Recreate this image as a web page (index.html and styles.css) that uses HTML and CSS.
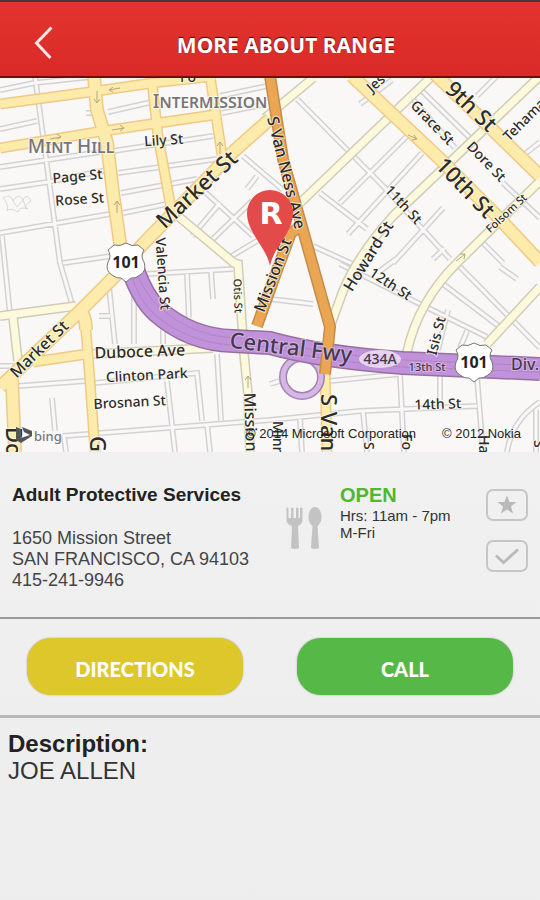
FILE: index.html
```
<!DOCTYPE html>
<html lang="en">
<head>
  <meta charset="utf-8">
  <meta name="viewport" content="width=device-width, initial-scale=1">
  <title>More About Range</title>
  <link rel="stylesheet" href="styles.css">
</head>
<body>
<header class="topbar">
  <a class="back" href="#" aria-label="Back">
    <svg width="20" height="34" viewBox="0 0 20 34"><path d="M17.500 1.500L2.500 17L16.500 32"/></svg>
  </a>
  <h1>MORE ABOUT RANGE</h1>
</header>

<main>
  <svg class="map" viewBox="0 78 540 374" role="img" aria-label="Map">
    <defs>
      <!-- side streets, stroked twice to get the double outline -->
      <path id="streets" d="M35 76L60 263L72 304M0 129L37 121M0 90L34 83L90 77M108 112L152 102M86 113H97M220 96L267 86M222 113L262 105M113 151L213 136M118 173L217 159M121 193L197 179M123 213L167 204M0 167L100 152M0 189L48 182L107 170M0 233L110 214M63 263L112 256M2 236L10 314M243 156L283 190M257 176L247 189M205 192L253 236M192 236L220 203M213 239L252 201M230 257L262 238
      M297 99L383 186L450 259M320 193L367 229M340 203L407 136M348 234L422 153M420 89L470 138M360 104L392 80M410 96L455 148M477 96L497 76M525 154L540 142M503 183L540 218M393 263L443 208M433 259L445 248M483 243L503 263M313 246L357 266M340 264L420 304L487 337M443 284L500 327M460 267L540 348M500 267L517 279M380 271L396 259M270 299L313 304M467 331L460 348M448 310L438 350
      M330 381L400 374L404 452M440 374V400M477 377L483 452M363 411L367 452M300 419L302 452M270 384L280 381M507 452Q512 420 540 402M536 410V452M18 386L85 381M95 383L197 373L202 421M52 398L55 431M63 436L270 420L360 411L477 406M167 381L175 452M217 354L221 421M207 424L210 452M64 436L66 452M187 274L189 318M211 271L213 299M147 274L233 269M134 291V344M109 287L115 344M99 316H110M163 320V344M0 366H17"/>
      <g id="pale">
        <path d="M178 216L234 263L238 264L244 354L248 394L250 452M265 118L313 78M300 203L430 78M330 327L343 291Q358 255 393 216L470 143L540 76M540 181L457 263Q418 302 407 352M540 287L487 344M0 316L76 306M13 317L18 361M90 354L213 348"/>
      </g>
      <g id="yellow">
        <path d="M0 104L97 91L152 83L215 76M0 148L97 132L158 123L220 114M152 82L158 136L171 208M210 76L222 155M85 319L90 381L95 452M33 362L87 354M325 374L327 452"/>
        <path class="wide" d="M94 76L97 110L107 143L113 193L121 250M270 119L233 152L143 244L117 274L80 311L0 387M80 311Q86 316 86 330M12 380L15 452M352 76L440 159L497 216L540 262M435 74L540 176"/>
      </g>
      <path id="orange" d="M270 76L283 159L313 266L330 327L325 374M257 326L277 270L291 233L302 225"/>
      <path id="freeway" d="M133 270Q143 298 157 311Q190 340 233 341L270 343Q320 357 403 363L540 369"/>
      <g id="shield">
        <path d="M-12 -17Q-6 -15 0 -19Q6 -15 12 -17L18 -12Q14 -6 18 0Q21 9 14 13Q9 17 5 16L0 20L-5 16Q-9 17 -14 13Q-21 9 -18 0Q-14 -6 -18 -12Z"/>
        <text y="6">101</text>
      </g>
    </defs>

    <rect class="land" y="78" width="540" height="374"/>
    <use href="#streets" class="street-edge"/>
    <use href="#streets" class="street"/>
    <path class="park" d="M3 198q8-5 10 3q5-9 10-1q4-8 8 1q-9 5-3 8q-9-3-10 3q-9-5-11-1q2-7-4-13M13 201l4 6l6-7l3 8"/>
    <use href="#pale" class="pale-edge"/>
    <use href="#pale" class="pale"/>
    <use href="#yellow" class="yellow-edge"/>
    <use href="#yellow" class="yellow"/>
    <circle class="ramp-edge" cx="302" cy="377" r="19"/>
    <circle class="ramp" cx="302" cy="377" r="19"/>
    <use href="#freeway" class="freeway-edge"/>
    <use href="#freeway" class="freeway"/>
    <path class="lane" d="M137 275Q147 296 160 308Q192 336 233 338L270 340Q320 354 403 360L540 366M130 272Q139 300 154 314Q188 343 233 345L270 347Q320 361 403 367L540 372"/>
    <use href="#orange" class="orange-edge"/>
    <use href="#orange" class="orange"/>
    <path class="arrow" d="M120 88l-11 2m4-3l-4 3l4 2M97 91v12m-3-4l3 4l3-4M112 130l12-2m-4-3l4 3l-4 3M50 139l11-2m-4-3l4 3l-4 2M117 213v-12m-3 4l3-4l3 4M220 154v-12m-3 4l3-4l3 4M408 135l9 4m-3-4l3 4l-5 1M456 261l9-7m-5 0l5 0l-1 5M248 388v-12m-3 4l3-4l3 4"/>

    <g class="labels">
      <text class="area" transform="translate(210 108)">Intermission</text>
      <text class="area" transform="translate(71 153)">Mint Hill</text>
      <text class="s14" transform="translate(188 82)">Fo</text>
      <text class="s14" transform="translate(164 145) rotate(-4)">Lily St</text>
      <text class="s14" transform="translate(78 181) rotate(-5)">Page St</text>
      <text class="s14" transform="translate(80 204) rotate(-4)">Rose St</text>
      <text class="s22" transform="translate(202 195) rotate(-43)">Market St</text>
      <text class="s14" transform="translate(158 274) rotate(86)">Valencia St</text>
      <text class="s11" transform="translate(234 296) rotate(88)">Otis St</text>
      <text class="s16" transform="translate(278 277) rotate(-69)">Mission St</text>
      <text class="s16" transform="translate(281 174) rotate(76)">S Van Ness Ave</text>
      <text class="s16" transform="translate(373 259) rotate(-58)">Howard St</text>
      <text class="s22" transform="translate(466 112) rotate(44)">9th St</text>
      <text class="s22" transform="translate(460 193) rotate(46)">10th St</text>
      <text class="s14" transform="translate(429 126) rotate(46)">Grace St</text>
      <text class="s14" transform="translate(483 165) rotate(46)">Dore St</text>
      <text class="s14 from" transform="translate(509 142) rotate(-45)">Tehama</text>
      <text class="s11" transform="translate(509 216) rotate(-43)">Folsom St</text>
      <text class="s14" transform="translate(400 208) rotate(47)">11th St</text>
      <text class="s14" transform="translate(388 288) rotate(33)">12th St</text>
      <text class="s14 from" transform="translate(372 93) rotate(-42)">Jes</text>
      <text class="s16" transform="translate(43 353) rotate(-44)">Market St</text>
      <text class="s16" transform="translate(140 357) rotate(-2)">Duboce Ave</text>
      <text class="s14" transform="translate(147 380) rotate(-3)">Clinton Park</text>
      <text class="s14" transform="translate(130 407) rotate(-3)">Brosnan St</text>
      <text class="s14" transform="translate(441 337) rotate(-76)">Isis St</text>
      <text class="s14" transform="translate(438 409) rotate(-2)">14th St</text>
      <text class="s16 from" transform="translate(244 393) rotate(88)">Mission</text>
      <text class="s22 from" transform="translate(6 427) rotate(90)">Do</text>
      <text class="s22 from" transform="translate(90 436) rotate(90)">G</text>
      <text class="s22 from" transform="translate(321 394) rotate(90)">S Van</text>
      <text class="s14 from" transform="translate(273 421) rotate(90)">Minn</text>
      <text class="s14 from" transform="translate(364 442) rotate(90)">S</text>
      <text class="s14 from" transform="translate(402 434) rotate(90)">Fo</text>
      <text class="s14 from" transform="translate(479 435) rotate(90)">Ha</text>
      <text class="s14 from" transform="translate(534 440) rotate(90)">S</text>
    </g>
    <g class="labels freeway-labels">
      <text class="s22" transform="translate(290 355) rotate(7)">Central Fwy</text>
      <ellipse cx="380" cy="359" rx="21" ry="9"/>
      <text class="s14" transform="translate(380 364)">434A</text>
      <text class="s11" transform="translate(427 371)">13th St</text>
      <text class="s16 from" transform="translate(511 370)">Div.</text>
    </g>

    <use href="#shield" class="shield" x="126" y="262"/>
    <use href="#shield" class="shield" x="474" y="362"/>

    <path class="pin" d="M270 266C266 246 247 233 247 213A23 23 0 0 1 293 213C293 233 274 246 270 266Z"/>
    <text class="pin-letter" x="271" y="224">R</text>

    <path class="bing-mark" d="M16 427l5 2v9l9-3l-6-3l-2-5l10 4v5l-11 7l-5-3z"/>
    <text class="bing" x="34" y="441">bing</text>
    <text class="credit" x="246" y="438">© 2014 Microsoft Corporation</text>
    <text class="credit" x="442" y="438">© 2012.Nokia</text>
  </svg>

  <section class="info">
    <div class="place">
      <h2>Adult Protective Services</h2>
      <address>
        1650 Mission Street<br>
        SAN FRANCISCO, CA 94103<br>
        415-241-9946
      </address>
    </div>
    <svg class="food" width="36" height="42" viewBox="0 0 36 42">
      <path d="M0.500 1Q1.500 0 2.500 1V11H5V1Q6.500 0 7.500 1V11H10V1Q11.500 0 12.500 1V11H14V1Q15.500 0 16.500 1V13Q16.500 17 12 19L13 41Q9 43 5 41L6 19Q0.500 17 0.500 13Z"/>
      <path d="M29 0C33 0 35.500 5 35.500 10Q35.500 16 31.500 19L33 41Q29 43 25 41L26.500 19Q22.500 16 22.500 10C22.500 5 25 0 29 0Z"/>
    </svg>
    <div class="hours">
      <strong>OPEN</strong>
      <p>Hrs: 11am - 7pm<br>M-Fri</p>
    </div>
    <div class="marks">
      <button type="button" aria-label="Favorite">
        <svg width="20" height="20" viewBox="0 0 20 20"><path class="star" d="M10 0.500L12.600 7H19.500L14 11.500L16 18.500L10 14.500L4 18.500L6 11.500L0.500 7H7.400Z"/></svg>
      </button>
      <button type="button" aria-label="Check in">
        <svg width="26" height="18" viewBox="0 0 26 18"><path class="tick" d="M2 8.500L9.500 15.500L24 2.500"/></svg>
      </button>
    </div>
  </section>

  <div class="actions">
    <button type="button" class="btn directions">DIRECTIONS</button>
    <button type="button" class="btn call">CALL</button>
  </div>

  <section class="description">
    <h2>Description:</h2>
    <p>JOE ALLEN</p>
  </section>
</main>
</body>
</html>
```
FILE: styles.css
```
* {
  box-sizing: border-box;
  margin: 0;
  padding: 0;
}

body {
  min-height: 100vh;
  font-family: "Liberation Sans", Arial, sans-serif;
  color: #222;
  background: linear-gradient(#f4f4f4, #ededed);
}

/* header */
.topbar {
  display: flex;
  align-items: center;
  height: 78px;
  padding: 8px 34px 0;
  border-top: 2px solid #503238;
  border-bottom: 2px solid #6c0d0e;
  background: linear-gradient(#e4342f, #d92a27);
}

.back {
  display: flex;
}

.back path {
  fill: none;
  stroke: #ffe9e4;
  stroke-width: 3;
}

.topbar h1 {
  flex: 1;
  padding: 4px 0 0 12px;
  font-family: "Noto Sans", "Open Sans", sans-serif;
  font-size: 21px;
  line-height: 28px;
  text-align: center;
  color: #fff;
  text-shadow: 0 -1px 1px #400;
}

/* map */
.map {
  display: block;
  width: 100%;
  height: auto;
  overflow: hidden;
  font-family: "Noto Sans", "Open Sans", sans-serif;
  font-weight: 500;
}

.map use,
.map .lane,
.map .arrow,
.map .park,
.map circle {
  fill: none;
}

.land { fill: #faf8f7; }
.street-edge { stroke: #d3d2d2; stroke-width: 6; }
.street { stroke: #f9f7f7; stroke-width: 3; }
.park { stroke: #d8d8d8; stroke-width: 1; }
.pale-edge { stroke: #cfcdb8; stroke-width: 10; }
.pale { stroke: #fcf9dc; stroke-width: 7; }
.yellow-edge { stroke: #efca86; stroke-width: 11; }
.yellow { stroke: #fdebab; stroke-width: 8; }
.yellow-edge { --wide: 14px; }
.yellow { --wide: 11px; }
.wide { stroke-width: var(--wide); }
.orange-edge { stroke: #c48c4a; stroke-width: 12; }
.orange { stroke: #eba653; stroke-width: 9; }
.freeway-edge { stroke: #97709d; stroke-width: 24; }
.freeway { stroke: #c092dc; stroke-width: 21; }
.lane { stroke: #b384bd; stroke-width: 1; }
.ramp-edge { stroke: #a284b0; stroke-width: 8; }
.ramp { stroke: #d5b6e6; stroke-width: 5; }
.arrow { stroke: #b5a680; stroke-width: 1; }

.labels {
  fill: #2c2c2c;
  stroke: #fffdf5;
  stroke-width: 2;
  stroke-opacity: 0.7;
  paint-order: stroke;
  text-anchor: middle;
}

.labels .from { text-anchor: start; }
.s11 { font-size: 11px; }
.s14 { font-size: 14px; }
.s16 { font-size: 16px; }
.s22 { font-size: 22px; }

.area {
  font-size: 19px;
  font-variant: small-caps;
  fill: #77757a;
}

.freeway-labels {
  fill: #47384f;
  stroke: #dcc3ea;
}

.freeway-labels ellipse {
  fill: #e6d4f0;
  stroke: #a98bb8;
  stroke-width: 1;
}

.map .shield {
  fill: #fff;
  stroke: #777;
  stroke-width: 1;
}

.shield text,
#shield text {
  fill: #222;
  stroke: none;
  font-size: 16px;
  font-weight: bold;
  text-anchor: middle;
}

.pin { fill: #e34b4a; }

.pin-letter {
  font-family: "DejaVu Sans", sans-serif;
  font-size: 30px;
  font-weight: bold;
  fill: #fff;
  text-anchor: middle;
}

.bing-mark { fill: #555; }

.bing {
  font-size: 13px;
  fill: #777;
}

.credit {
  font-family: "Liberation Sans", Arial, sans-serif;
  font-size: 13px;
  font-weight: normal;
  fill: #222;
}

/* place details */
.info {
  display: grid;
  grid-template-columns: 1fr 36px 128px 42px;
  column-gap: 18px;
  align-items: start;
  padding: 32px 12px 26px;
  border-bottom: 2px solid #999;
}

.place {
  white-space: nowrap;
}

.place h2 {
  margin-bottom: 23px;
  font-size: 19px;
  line-height: 21px;
}

.place address {
  font-size: 18px;
  font-style: normal;
  line-height: 21px;
  color: #444;
}

.food {
  margin-top: 23px;
  fill: #c3c3c3;
}

.hours strong {
  display: block;
  font-size: 20px;
  line-height: 23px;
  color: #4fb82e;
}

.hours p {
  font-size: 15px;
  line-height: 17px;
  color: #333;
}

.marks {
  display: grid;
  gap: 19px;
  padding-top: 5px;
}

.marks button {
  display: flex;
  align-items: center;
  justify-content: center;
  height: 32px;
  border: 2px solid #c6c6c6;
  border-radius: 7px;
  background: none;
}

.star { fill: #b9b9b9; }

.tick {
  fill: none;
  stroke: #bbb;
  stroke-width: 3;
}

/* buttons */
.actions {
  display: grid;
  grid-template-columns: 1fr 1fr;
  gap: 54px;
  padding: 19px 27px 20px;
  border-bottom: 3px solid #b8b8b8;
}

.btn {
  height: 57px;
  border: none;
  border-radius: 24px;
  padding-top: 5px;
  font-family: Lato, sans-serif;
  font-size: 20px;
  font-weight: 900;
  color: #fff;
  box-shadow: 0 0 2px rgba(0, 0, 0, 0.3);
}

.directions { background: #dec72b; }
.call { background: #56b947; }

.description {
  padding: 12px 8px;
  font-size: 24px;
  line-height: 27px;
}

.description h2 {
  font-size: 24px;
}

.description p {
  color: #333;
}
```
